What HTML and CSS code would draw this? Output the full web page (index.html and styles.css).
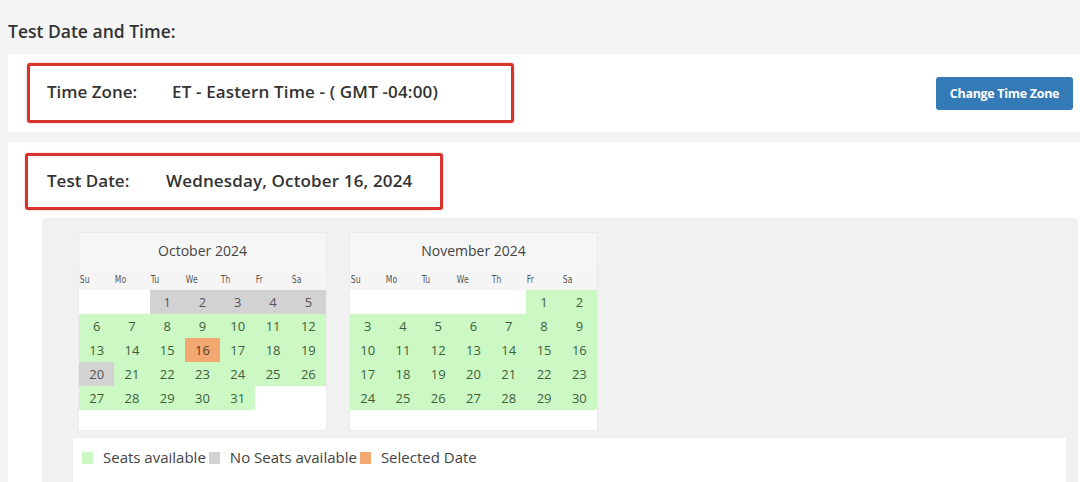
FILE: index.html
```html
<!DOCTYPE html>
<html lang="en">
<head>
  <meta charset="UTF-8">
  <meta name="viewport" content="width=device-width, initial-scale=1.0">
  <title>Test Date and Time</title>
  <link rel="stylesheet" href="styles.css">
</head>
<body>
  <h2 class="section-title">Test Date and Time:</h2>

  <div class="panel panel-zone">
    <div class="mark mark-zone">
      <span class="label">Time Zone:</span>
      <span class="value">ET - Eastern Time - ( GMT -04:00)</span>
    </div>
    <button class="btn">Change Time Zone</button>
  </div>

  <div class="panel panel-date">
    <div class="mark mark-date">
      <span class="label label-date">Test Date:</span>
      <span class="value">Wednesday, October 16, 2024</span>
    </div>

    <div class="picker">
      <div class="months">
        <div class="cal">
          <div class="cal-title">October 2024</div>
          <div class="grid">
            <span class="dow">Su</span><span class="dow">Mo</span><span class="dow">Tu</span><span class="dow">We</span><span class="dow">Th</span><span class="dow">Fr</span><span class="dow">Sa</span>
            <span class="day"></span><span class="day"></span>
            <span class="day full">1</span><span class="day full">2</span><span class="day full">3</span><span class="day full">4</span><span class="day full">5</span>
            <span class="day open">6</span><span class="day open">7</span><span class="day open">8</span><span class="day open">9</span><span class="day open">10</span><span class="day open">11</span><span class="day open">12</span>
            <span class="day open">13</span><span class="day open">14</span><span class="day open">15</span><span class="day picked">16</span><span class="day open">17</span><span class="day open">18</span><span class="day open">19</span>
            <span class="day full">20</span><span class="day open">21</span><span class="day open">22</span><span class="day open">23</span><span class="day open">24</span><span class="day open">25</span><span class="day open">26</span>
            <span class="day open">27</span><span class="day open">28</span><span class="day open">29</span><span class="day open">30</span><span class="day open">31</span><span class="day"></span><span class="day"></span>
          </div>
        </div>

        <div class="cal">
          <div class="cal-title">November 2024</div>
          <div class="grid">
            <span class="dow">Su</span><span class="dow">Mo</span><span class="dow">Tu</span><span class="dow">We</span><span class="dow">Th</span><span class="dow">Fr</span><span class="dow">Sa</span>
            <span class="day"></span><span class="day"></span><span class="day"></span><span class="day"></span><span class="day"></span>
            <span class="day open">1</span><span class="day open">2</span>
            <span class="day open">3</span><span class="day open">4</span><span class="day open">5</span><span class="day open">6</span><span class="day open">7</span><span class="day open">8</span><span class="day open">9</span>
            <span class="day open">10</span><span class="day open">11</span><span class="day open">12</span><span class="day open">13</span><span class="day open">14</span><span class="day open">15</span><span class="day open">16</span>
            <span class="day open">17</span><span class="day open">18</span><span class="day open">19</span><span class="day open">20</span><span class="day open">21</span><span class="day open">22</span><span class="day open">23</span>
            <span class="day open">24</span><span class="day open">25</span><span class="day open">26</span><span class="day open">27</span><span class="day open">28</span><span class="day open">29</span><span class="day open">30</span>
          </div>
        </div>
      </div>

      <div class="legend">
        <span class="key key-open"></span><span class="key-text">Seats available</span>
        <span class="key key-full"></span><span class="key-text">No Seats available</span>
        <span class="key key-picked"></span><span class="key-text">Selected Date</span>
      </div>
    </div>
  </div>
</body>
</html>
```

FILE: styles.css
```css
:root {
  --page: #f5f5f5;
  --white: #fff;
  --text: #333;
  --red: #d8322c;
  --blue: #337ab7;
  --open: #ccf8c4;
  --full: #d2d2d2;
  --picked: #f2a870;
}

body {
  margin: 0;
  background: var(--page);
  color: var(--text);
  font-family: 'Open Sans', 'Liberation Sans', sans-serif;
  height: 482px;
  overflow: hidden;
}

.section-title {
  margin: 0;
  height: 54px;
  padding-left: 8px;
  font-size: 17.5px;
  font-weight: 600;
  line-height: 62px;
  box-sizing: border-box;
}

.panel {
  background: var(--white);
  margin-left: 8px;
}

.panel-zone {
  display: flex;
  align-items: center;
  justify-content: space-between;
  padding: 9px 7px 9px 19px;
  margin-bottom: 10px;
}

.mark {
  display: flex;
  align-items: center;
  border: 3px solid var(--red);
  border-radius: 3px;
  box-shadow: 0 0 2px rgba(216, 50, 44, 0.4);
  font-size: 17px;
  font-weight: 600;
  padding-left: 17px;
  padding-bottom: 3px;
  box-sizing: border-box;
}

.mark-zone {
  width: 487px;
  height: 60px;
}

.mark-date {
  width: 418px;
  height: 57px;
  margin-left: 17px;
  padding-left: 19px;
}

.label {
  width: 125px;
}

.label-date {
  width: 119px;
}

.value {
  letter-spacing: 0.15px;
}

.btn {
  width: 137px;
  height: 33px;
  background: var(--blue);
  color: var(--white);
  border: 0;
  border-radius: 3px;
  font-family: 'Open Sans', sans-serif;
  font-size: 12.5px;
  font-weight: 700;
  letter-spacing: -0.3px;
  padding: 0;
}

.panel-date {
  padding-top: 11px;
  height: 329px;
  overflow: hidden;
}

.picker {
  margin: 8px 2px 0 34px;
  background: #f1f1f1;
  padding-top: 14px;
  height: 251px;
  overflow: hidden;
}

.months {
  display: flex;
  gap: 22px;
  padding-left: 36px;
}

.cal {
  width: 249px;
  background: #f6f6f6;
  border: 1px solid #ebebeb;
  box-sizing: border-box;
}

.cal-title {
  text-align: center;
  font-size: 14px;
  height: 35px;
  line-height: 35px;
  color: #444;
}

.grid {
  display: grid;
  grid-template-columns: repeat(7, 1fr);
  grid-auto-rows: 24px;
  grid-template-rows: 22px;
  padding-bottom: 20px;
  background: linear-gradient(var(--page), var(--page)) top / 100% 22px no-repeat, var(--white);
}

.dow {
  font-family: 'DejaVu Sans Condensed', 'DejaVu Sans', sans-serif;
  font-size: 10px;
  color: #555;
  padding-left: 1px;
  line-height: 24px;
  transform: scaleX(0.85);
  transform-origin: left;
}

.day {
  text-align: center;
  font-size: 13px;
  line-height: 24px;
  color: #3f5f3a;
}

.open {
  background: var(--open);
}

.full {
  background: var(--full);
  color: #555;
}

.picked {
  background: var(--picked);
  color: #5b3a1c;
}

.legend {
  display: flex;
  margin: 7px 12px 0 31px;
  background: var(--white);
  height: 60px;
  padding: 9px 0 0 9px;
  align-items: flex-start;
  box-sizing: border-box;
  font-size: 15px;
  color: #444;
}

.key {
  width: 11px;
  height: 12px;
  margin: 5px 10px 0 0;
}

.key-text {
  margin-right: 3px;
}

.key-open {
  background: var(--open);
}

.key-full {
  background: var(--full);
}

.key-picked {
  background: var(--picked);
}
```
